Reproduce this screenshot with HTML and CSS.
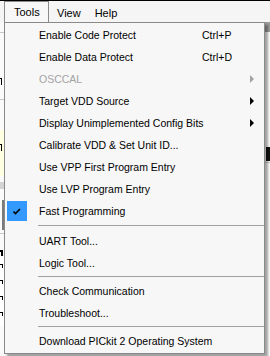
FILE: index.html
```html
<!DOCTYPE html>
<html lang="en">
<head>
    <meta charset="UTF-8">
    <title>Tools Menu</title>
    <link rel="stylesheet" href="styles.css">
</head>
<body>
    <div class="window">
        <div class="menubar">
            <div class="mb-item active">Tools</div>
            <div class="mb-item view">View</div>
            <div class="mb-item help">Help</div>
        </div>
        <div class="app">
            <div class="strip left">
                <div class="seg s1"></div>
                <div class="seg s2"><span class="mark"></span></div>
                <div class="seg s3"></div>
                <div class="seg s4"><span class="mark"></span></div>
                <div class="seg s5"></div>
                <div class="seg s6"><span class="bar"></span></div>
                <div class="seg s7"><span class="mark bold"></span></div>
                <div class="seg s8">
                    <span class="mark sm"></span>
                    <span class="mark sm"></span>
                    <span class="mark sm"></span>
                    <span class="mark sm"></span>
                </div>
            </div>
            <div class="strip right">
                <div class="seg r1"></div>
                <div class="seg r2"><span class="bar dark"></span></div>
                <div class="seg r3"></div>
            </div>
        </div>

        <div class="menu">
            <div class="item"><span class="label">Enable Code Protect</span><span class="key">Ctrl+P</span></div>
            <div class="item"><span class="label">Enable Data Protect</span><span class="key">Ctrl+D</span></div>
            <div class="item disabled"><span class="label">OSCCAL</span><span class="arrow"></span></div>
            <div class="item"><span class="label">Target VDD Source</span><span class="arrow"></span></div>
            <div class="item"><span class="label">Display Unimplemented Config Bits</span><span class="arrow"></span></div>
            <div class="item"><span class="label">Calibrate VDD &amp; Set Unit ID...</span></div>
            <div class="item"><span class="label">Use VPP First Program Entry</span></div>
            <div class="item"><span class="label">Use LVP Program Entry</span></div>
            <div class="item checked">
                <span class="check">
                    <svg width="8" height="7" viewBox="0 0 8 7"><path d="M0.5 3.5 L2.5 5.5 L7 1" fill="none" stroke="#000" stroke-width="1.6"/></svg>
                </span>
                <span class="label">Fast Programming</span>
            </div>
            <div class="sep sep-a"></div>
            <div class="item"><span class="label">UART Tool...</span></div>
            <div class="item"><span class="label">Logic Tool...</span></div>
            <div class="sep"></div>
            <div class="item"><span class="label">Check Communication</span></div>
            <div class="item"><span class="label">Troubleshoot...</span></div>
            <div class="sep"></div>
            <div class="item"><span class="label">Download PICkit 2 Operating System</span></div>
        </div>
    </div>
</body>
</html>
```

FILE: styles.css
```css
body {
    margin: 0;
    font-family: "Liberation Sans", Arial, sans-serif;
    font-size: 10.5px;
    color: #000;
    background-color: #f5f5f5;
}
.window {
    position: relative;
    width: 270px;
    height: 356px;
    overflow: hidden;
    border-top: 1px solid #000;
    box-sizing: border-box;
    background-color: #f5f5f5;
}
.menubar {
    display: flex;
    height: 21px;
    padding-left: 4px;
    align-items: flex-end;
    font-size: 11px;
}
.mb-item {
    height: 19px;
    line-height: 18px;
    box-sizing: border-box;
    border: 1px solid transparent;
    border-bottom: none;
}
.mb-item.active {
    width: 45px;
    padding-left: 9px;
    border-color: #8a8a8a;
    background-color: #f7f7f7;
    position: relative;
    z-index: 3;
    height: 21px;
    line-height: 20px;
}
.mb-item.view {
    margin-left: 7px;
}
.mb-item.help {
    margin-left: 12px;
}

/* application behind the dropdown */
.app {
    display: flex;
    justify-content: space-between;
    height: 334px;
}
.strip {
    display: flex;
    flex-direction: column;
    background-color: #fafafa;
}
.strip.left {
    width: 5px;
}
.strip.right {
    width: 6px;
}
.seg {
    box-sizing: border-box;
}
.mark {
    display: block;
    width: 2px;
    height: 7px;
    border-top: 1px solid #000;
    border-right: 1px solid #000;
    box-sizing: border-box;
}
.mark.bold {
    width: 3px;
    height: 6px;
    border-top-width: 2px;
    border-right-width: 2px;
}
.mark.sm {
    width: 3px;
    height: 4px;
    margin-bottom: 12px;
}
.s1 { height: 11px; border-bottom: 1px solid #c8c8c8; }
.s2 { height: 67px; padding-top: 45px; border-bottom: 1px solid #c8c8c8; }
.s3 { height: 30px; }
.s4 { height: 46px; background-color: #ffffe1; padding-top: 14px; }
.s5 { height: 24px; background: linear-gradient(#fafafa 6px, #d4d4d4 6px, #d4d4d4 13px, #fafafa 13px); }
.s6 { height: 34px; border-bottom: 1px solid #c8c8c8; }
.s6 .bar {
    display: block;
    width: 2px;
    height: 30px;
    margin-left: 2px;
    background-color: #7a7a7a;
}
.s7 { height: 22px; padding-top: 16px; }
.s8 { height: 70px; background-color: #fff; padding-top: 8px; }

.r1 { height: 10px; background-color: #9a9a9a; }
.r2 { height: 130px; padding-top: 115px; }
.r2 .bar.dark {
    display: block;
    width: 5px;
    height: 14px;
    margin-left: 2px;
    background-color: #111;
}
.r3 { flex: 1; border-top: 1px solid #c8c8c8; }

/* dropdown menu */
.menu {
    position: absolute;
    left: 4px;
    top: 21px;
    width: 261px;
    box-sizing: border-box;
    border: 1px solid #8a8a8a;
    background-color: #f7f7f7;
    padding: 1px 0 1px 0;
    box-shadow: 3px 3px 2px rgba(0, 0, 0, 0.35);
    z-index: 2;
}
.item {
    display: flex;
    align-items: center;
    height: 22px;
    padding-left: 34px;
    position: relative;
}
.item .label {
    flex: 1;
    white-space: nowrap;
}
.item .key {
    width: 62px;
}
.item.disabled {
    color: #a3a3a3;
}
.arrow {
    width: 0;
    height: 0;
    border-top: 4px solid transparent;
    border-bottom: 4px solid transparent;
    border-left: 4px solid #000;
    margin-right: 10px;
}
.item.disabled .arrow {
    border-left-color: #a3a3a3;
}
.check {
    position: absolute;
    left: 2px;
    top: 1px;
    width: 20px;
    height: 20px;
    background-color: #3399ff;
    display: flex;
    align-items: center;
    justify-content: center;
}
.sep {
    height: 6px;
    margin-left: 33px;
    background: linear-gradient(transparent 2px, #a0a0a0 2px, #a0a0a0 3px, transparent 3px);
}
.sep-a {
    height: 8px;
    background: linear-gradient(transparent 3px, #a0a0a0 3px, #a0a0a0 4px, transparent 4px);
}
```
